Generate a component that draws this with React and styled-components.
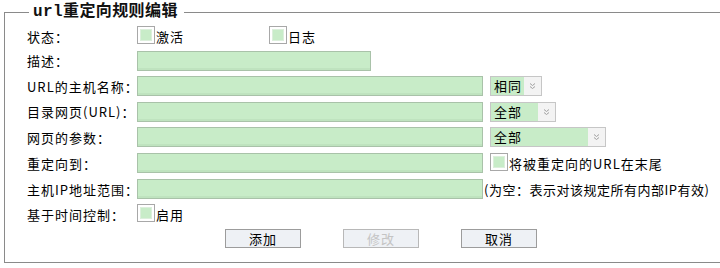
import React from 'react'
import styled, { createGlobalStyle } from 'styled-components'

const GlobalStyle = createGlobalStyle`
    html, body {
        margin: 0;
        padding: 0;
        overflow: hidden;
        background: #fff;
    }
    body {
        font-family: "Noto Sans CJK SC", "Liberation Sans", sans-serif;
        font-size: 13px;
        color: #000;
    }
`

const rows = [
    { id: 1, label: '状态：', h: 24 },
    { id: 2, label: '描述：', h: 25 },
    { id: 3, label: 'URL的主机名称：', h: 26 },
    { id: 4, label: '目录网页(URL)：', h: 25 },
    { id: 5, label: '网页的参数：', h: 26 },
    { id: 6, label: '重定向到：', h: 26 },
    { id: 7, label: '主机IP地址范围：', h: 26 },
    { id: 8, label: '基于时间控制：', h: 24 },
]

function Arrow() {
    return (
        <svg width="7" height="8" viewBox="0 0 7 8">
            <path d="M1 1.5 L3.5 3.5 L6 1.5 M1 4.5 L3.5 6.5 L6 4.5" fill="none" stroke="#a0a0a0" strokeWidth="1" />
        </svg>
    )
}

function Check({ text }) {
    return (
        <CheckWrap>
            <CheckBox><CheckInner /></CheckBox>
            {text && <CheckText>{text}</CheckText>}
        </CheckWrap>
    )
}

function Select({ value, width }) {
    return (
        <SelectBox width={width}>
            <SelectValue>{value}</SelectValue>
            <SelectArrow><Arrow /></SelectArrow>
        </SelectBox>
    )
}

function Field({ id }) {
    switch (id) {
        case 1:
            return (
                <>
                    <CheckGroup><Check text="激活" /></CheckGroup>
                    <Check text="日志" />
                </>
            )
        case 2:
            return <TextInput width={234} />
        case 3:
            return <><TextInput width={346} /><Select value="相同" width={52} /></>
        case 4:
            return <><TextInput width={346} /><Select value="全部" width={66} /></>
        case 5:
            return <><TextInput width={346} /><Select value="全部" width={116} /></>
        case 6:
            return <><TextInput width={346} /><Check text="将被重定向的URL在末尾" /></>
        case 7:
            return <><TextInput width={346} /><Hint>(为空：表示对该规定所有内部IP有效)</Hint></>
        case 8:
            return <Check text="启用" />
        default:
            return null
    }
}

export default function App() {
    return (
        <>
            <GlobalStyle />
            <Frame>
                <Legend>url重定向规则编辑</Legend>
                {rows.map(row => (
                    <Row key={row.id} h={row.h}>
                        <Label>{row.label}</Label>
                        <Controls gap={row.id === 7 ? 1 : 7}>
                            <Field id={row.id} />
                        </Controls>
                    </Row>
                ))}
                <ButtonRow>
                    <Button>添加</Button>
                    <Button disabled>修改</Button>
                    <Button>取消</Button>
                </ButtonRow>
            </Frame>
        </>
    )
}

const Frame = styled.fieldset`
    box-sizing: border-box;
    margin: 2px 0 0 4px;
    width: 716px;
    padding: 2px 0 12px 22px;
    border: 1px solid #8a8a8a;
    border-right: none;
    min-width: 0;
`

const Legend = styled.legend`
    margin-left: 2px;
    padding: 0 6px 0 4px;
    font-family: "Liberation Mono", "Noto Sans CJK SC", monospace;
    font-weight: bold;
    font-size: 16px;
    line-height: 20px;
    letter-spacing: 0.4px;
    color: #111;
`

const Row = styled.div`
    display: flex;
    align-items: center;
    height: ${p => p.h}px;
`

const Label = styled.div`
    width: 110px;
    flex-shrink: 0;
    letter-spacing: 1px;
    white-space: nowrap;
`

const Controls = styled.div`
    display: flex;
    align-items: center;
    gap: ${p => p.gap}px;
`

const TextInput = styled.div`
    box-sizing: border-box;
    width: ${p => p.width}px;
    height: 20px;
    background: #c8ecc8;
    border: 1px solid #a9c2a9;
    box-shadow: inset 0 -2px 0 #bfe3bf;
`

const CheckGroup = styled.div`
    width: 125px;
`

const CheckWrap = styled.div`
    display: flex;
    align-items: center;
`

const CheckBox = styled.div`
    box-sizing: border-box;
    width: 18px;
    height: 18px;
    border: 1px solid #a8a8a8;
    background: #fff;
    padding: 2px;
    margin-top: -3px;
`

const CheckInner = styled.div`
    box-sizing: border-box;
    width: 12px;
    height: 12px;
    background: #c8ecc8;
    border: 1px solid #dcefdc;
`

const CheckText = styled.span`
    letter-spacing: 1px;
    margin-left: 1px;
`

const SelectBox = styled.div`
    box-sizing: border-box;
    width: ${p => p.width}px;
    height: 20px;
    display: flex;
    border: 1px solid #c6c6c6;
    background: #f3f3f3;
`

const SelectValue = styled.div`
    flex: 1;
    background: #c8ecc8;
    padding-left: 3px;
    line-height: 18px;
    letter-spacing: 1px;
`

const SelectArrow = styled.div`
    width: 17px;
    display: flex;
    align-items: center;
    justify-content: center;
`

const Hint = styled.span`
    letter-spacing: 0.5px;
    white-space: nowrap;
`

const ButtonRow = styled.div`
    display: flex;
    align-items: center;
    gap: 42px;
    height: 24px;
    padding-left: 198px;
`

const Button = styled.button`
    box-sizing: border-box;
    width: 76px;
    height: 19px;
    padding: 0;
    font-family: "Noto Sans CJK SC", sans-serif;
    font-size: 13px;
    line-height: 17px;
    letter-spacing: 1px;
    color: #000;
    background: #eef1f5;
    border: 1px solid #9c9c9c;
    border-radius: 0;

    &:disabled {
        color: #c4c4c4;
        border-color: #b8b8b8;
    }
`
